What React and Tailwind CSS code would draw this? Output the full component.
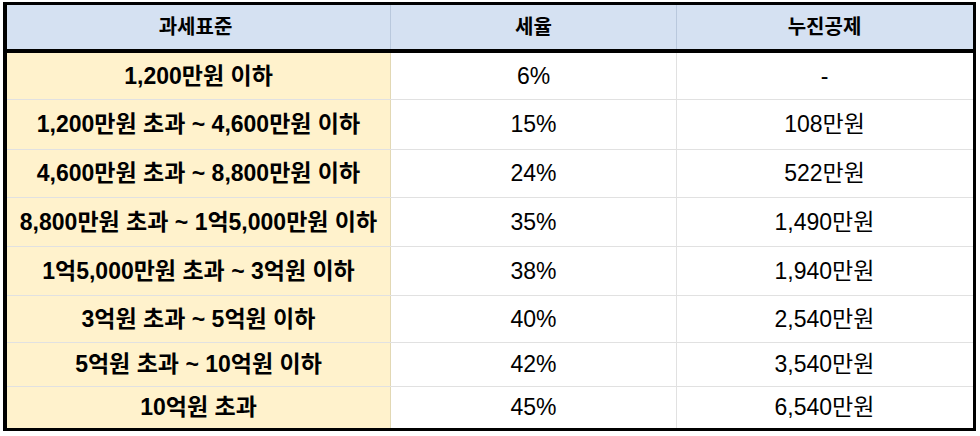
export default function App() {
  const rows = [
    ["1,200만원 이하", "6%", "-", 47],
    ["1,200만원 초과 ~ 4,600만원 이하", "15%", "108만원", 50],
    ["4,600만원 초과 ~ 8,800만원 이하", "24%", "522만원", 48],
    ["8,800만원 초과 ~ 1억5,000만원 이하", "35%", "1,490만원", 49],
    ["1억5,000만원 초과 ~ 3억원 이하", "38%", "1,940만원", 49],
    ["3억원 초과 ~ 5억원 이하", "40%", "2,540만원", 47],
    ["5억원 초과 ~ 10억원 이하", "42%", "3,540만원", 44],
    ["10억원 초과", "45%", "6,540만원", 41],
  ];
  const font = { fontFamily: '"Liberation Sans", "Noto Sans CJK KR", sans-serif' };
  return (
    <div className="w-[980px] h-[436px] bg-white pt-[2px] pl-[3px] text-black" style={font}>
      <div className="w-[973px] border-[3px] border-black border-l-4">
        <div className="grid grid-cols-[384px_286px_295px] h-[48px] bg-[#d5e1f2] border-b-4 border-black text-[20px] font-bold leading-none">
          <div className="flex items-center justify-center border-r border-[#b9c8dd] pr-[6px]">과세표준</div>
          <div className="flex items-center justify-center border-r border-[#b9c8dd]">세율</div>
          <div className="flex items-center justify-center">누진공제</div>
        </div>
        {rows.map(([a, b, c, h], i) => (
          <div
            key={i}
            className={
              "grid grid-cols-[384px_286px_295px] text-[23px] leading-none " +
              (i < rows.length - 1 ? "border-b border-[#e1e1e1]" : "")
            }
            style={{ height: h }}
          >
            <div className="flex items-center justify-center bg-[#fff2cc] font-bold border-r border-[#e2d8b4] whitespace-nowrap">{a}</div>
            <div className="flex items-center justify-center border-r border-[#e1e1e1]">{b}</div>
            <div className="flex items-center justify-center">{c}</div>
          </div>
        ))}
      </div>
    </div>
  );
}
